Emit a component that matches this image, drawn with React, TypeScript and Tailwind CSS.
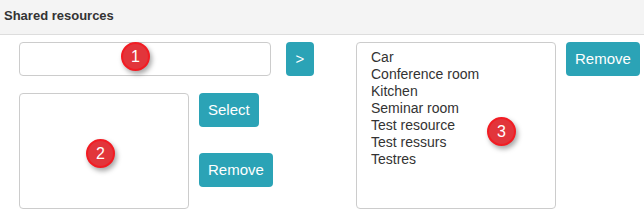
import React from 'react';

const resources = ['Car', 'Conference room', 'Kitchen', 'Seminar room', 'Test resource', 'Test ressurs', 'Testres'];

const Badge: React.FC<{ n: number; className: string }> = ({ n, className }) => (
    <span
        className={`absolute flex h-[29px] w-[29px] items-center justify-center rounded-full border-2 border-[#f21c23] bg-[#e2353b] text-[16px] text-white shadow-[2px_3px_5px_rgba(0,0,0,0.35)] ${className}`}
    >
        {n}
    </span>
);

const btn = 'h-[34px] rounded-[4px] bg-[#2ba3b6] px-[9px] text-[15px] text-white';

export default function App() {
    return (
        <div className="relative h-[221px] w-[644px] bg-white font-['Liberation_Sans',Arial,sans-serif] text-[#333]">
            <div className="flex h-[35px] items-center border-b border-[#ddd] bg-[#f4f4f4] pl-[4px] pb-[2px] text-[13px] font-bold">
                Shared resources
            </div>
            <div className="flex pt-[7px]">
                <div className="flex flex-col pl-[19px]">
                    <div className="flex items-start gap-[15px]">
                        <input className="h-[34px] w-[252px] rounded-[4px] border border-[#ccc] px-2 outline-none" />
                        <button className={`${btn} w-[28px] px-0`}>&gt;</button>
                    </div>
                    <div className="mt-[17px] flex gap-[10px]">
                        <div className="h-[116px] w-[170px] rounded-[4px] border border-[#ccc]" />
                        <div className="flex flex-col items-start gap-[26px]">
                            <button className={btn}>Select</button>
                            <button className={btn}>Remove</button>
                        </div>
                    </div>
                </div>
                <div className="ml-[42px] flex items-start gap-[10px]">
                    <div className="h-[167px] w-[200px] rounded-[4px] border border-[#ccc] pl-[14px] pt-[6px] text-[14px] leading-[17px] text-[#333]">
                        {resources.map(r => (
                            <div key={r}>{r}</div>
                        ))}
                    </div>
                    <button className={btn}>Remove</button>
                </div>
            </div>
            <Badge n={1} className="left-[121px] top-[42px]" />
            <Badge n={2} className="left-[86px] top-[139px]" />
            <Badge n={3} className="left-[487px] top-[117px]" />
        </div>
    );
}
